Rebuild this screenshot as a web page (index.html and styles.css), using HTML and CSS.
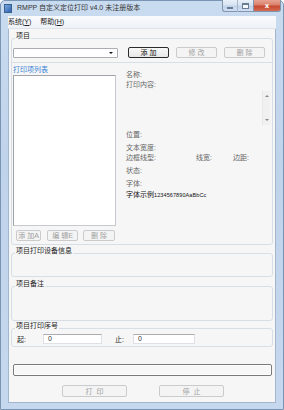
FILE: index.html
```html
<!DOCTYPE html>
<html lang="zh">
<head>
<meta charset="utf-8">
<title>RMPP</title>
<link rel="stylesheet" href="styles.css">
</head>
<body>
<div class="window">
  <div class="titlebar">
    <span class="app-icon"></span>
    <span class="title">RMPP 自定义定位打印 v4.0 未注册版本</span>
    <div class="caption-btns">
      <span class="cap cap-min"><i></i></span>
      <span class="cap cap-max"><i></i></span>
      <span class="cap cap-close">x</span>
    </div>
  </div>
  <div class="menubar">
    <span class="menu">系统(<u>Y</u>)</span>
    <span class="menu">帮助(<u>H</u>)</span>
  </div>
  <div class="client">
    <fieldset class="group g-project">
      <legend>项目</legend>
      <div class="toprow">
        <div class="combo"><span class="combo-arrow"></span></div>
        <button class="btn btn-focus w-top">添 加</button>
        <button class="btn btn-dis w-top" disabled>修 改</button>
        <button class="btn btn-dis w-top" disabled>删 除</button>
      </div>
      <div class="divider"></div>
      <div class="items">
        <div class="left-col">
          <div class="list-label">打印项列表</div>
          <div class="listbox"></div>
          <div class="list-btns">
            <button class="btn btn-dis w-a" disabled>添 加A</button>
            <button class="btn btn-dis w-b" disabled>编 辑E</button>
            <button class="btn btn-dis w-c" disabled>删 除</button>
          </div>
        </div>
        <div class="right-col">
          <div class="line">名称:</div>
          <div class="line">打印内容:</div>
          <div class="content-box">
            <div class="vscroll"><span class="arr up"></span><span class="arr down"></span></div>
          </div>
          <div class="line m5">位置:</div>
          <div class="line m3">文本宽度:</div>
          <div class="line three"><span>边框线型:</span><span class="c2">线宽:</span><span class="c3">边距:</span></div>
          <div class="line m3">状态:</div>
          <div class="line m3">字体:</div>
          <div class="line m1 sample">字体示例<span class="latin">1234567890AaBbCc</span></div>
        </div>
      </div>
    </fieldset>
    <fieldset class="group g-device">
      <legend>项目打印设备信息</legend>
    </fieldset>
    <fieldset class="group g-note">
      <legend>项目备注</legend>
    </fieldset>
    <fieldset class="group g-seq">
      <legend>项目打印序号</legend>
      <div class="seqrow">
        <span class="seq-l">起:</span>
        <div class="input in-start">0</div>
        <span class="seq-l seq-stop">止:</span>
        <div class="input in-stop">0</div>
      </div>
    </fieldset>
    <div class="progress"></div>
    <div class="bottom-btns">
      <button class="btn btn-dis w-big" disabled>打 &nbsp;印</button>
      <button class="btn btn-dis w-big" disabled>停 &nbsp;止</button>
    </div>
  </div>
</div>
</body>
</html>
```
FILE: styles.css
```css
* { box-sizing: border-box; margin: 0; padding: 0; }
html, body { width: 284px; height: 410px; overflow: hidden; }
body {
  font-family: "Liberation Sans", "Noto Sans CJK SC", sans-serif;
  font-size: 7px;
  color: #444;
  background: #fff;
}
.window {
  width: 284px;
  height: 410px;
  background: linear-gradient(180deg, #c9dbef 0%, #bfd3eb 40%, #c6d8ed 100%);
  border: 1px solid #7a94b4;
  border-radius: 5px 5px 0 0;
  display: flex;
  flex-direction: column;
  padding: 0 7px 6px 7px;
}
.titlebar {
  height: 14px;
  display: flex;
  align-items: center;
  margin: 0 -7px;
  padding-left: 3px;
}
.app-icon {
  width: 8px; height: 9px;
  background: linear-gradient(135deg, #7aa7df, #2f63b2);
  border: 1px solid #3a5e8e;
  margin-right: 5px;
  margin-top: 1px;
}
.title { color: #333; line-height: 10px; white-space: nowrap; }
.caption-btns {
  margin-left: auto;
  margin-right: 2px;
  display: flex;
  align-self: flex-start;
  margin-top: -1px;
}
.cap {
  height: 12px;
  border: 1px solid #8095ae;
  border-top: none;
  display: flex; align-items: center; justify-content: center;
  background: linear-gradient(180deg, #e8f0f8 0%, #d8e4f2 45%, #c0d2e8 55%, #d0e0f1 100%);
}
.cap-min { width: 16px; border-radius: 0 0 0 3px; border-right: 1px solid #a8b8cc; }
.cap-max { width: 16px; border-left: none; }
.cap-close {
  width: 27px; border-left: none; border-radius: 0 0 3px 0;
  background: linear-gradient(180deg, #e8a393 0%, #d8806a 45%, #c7472f 55%, #d46d52 100%);
  color: #fff; font-family: "DejaVu Sans", sans-serif; font-weight: bold; font-size: 7px; line-height: 8px;
}
.cap-min i { width: 6px; height: 2px; background: #fff; border: 1px solid #6a7c92; margin-top: 5px; display: block; }
.cap-max i { width: 7px; height: 6px; border: 1px solid #6a7c92; border-top-width: 2px; display: block; background: #f4f8fc; }
.menubar {
  height: 13px;
  display: flex;
  align-items: center;
  background: linear-gradient(180deg, #f9fbfd, #eef2f7);
  border-bottom: 1px solid #dfe4ea;
  margin-top: 1px;
  gap: 9px;
}
.menu { line-height: 10px; color: #222; }
.menu u { text-decoration: underline; }
.client {
  flex: 1;
  background: #f6f6f6;
  border: 1px solid #a4b6cc;
  border-top: none;
  padding: 3px 2px 0 2px;
  display: flex;
  flex-direction: column;
}
.group {
  border: 1px solid #d5dfe5;
  border-radius: 3px;
  padding: 0 1px;
  min-inline-size: 0;
}
.group legend {
  font-size: 7px;
  line-height: 8px;
  padding: 0 1px 4px 1px;
  margin-left: 2px;
  color: #222;
}
.toprow {
  display: flex;
  align-items: center;
  margin-top: 3px;
  height: 11px;
}
.combo {
  width: 105px;
  height: 10px;
  background: #fff;
  border: 1px solid #abadb3;
  border-radius: 1px;
  display: flex;
  justify-content: flex-end;
  align-items: center;
  padding-right: 4px;
}
.combo-arrow {
  width: 0; height: 0;
  border-left: 2px solid transparent;
  border-right: 2px solid transparent;
  border-top: 2px solid #111;
}
.btn {
  height: 11px;
  font-family: inherit;
  font-size: 7px;
  line-height: 9px;
  border: 1px solid #707070;
  border-radius: 2px;
  background: linear-gradient(180deg, #f2f2f2 0%, #ebebeb 50%, #dddddd 51%, #cfcfcf 100%);
  color: #222;
  text-align: center;
  white-space: pre;
}
.btn-focus { border-color: #2b2b2b; background: linear-gradient(180deg, #f8f8f8, #e8e8e8); color: #111; }
.btn-dis {
  border-color: #c9cbcd;
  background: #f4f4f4;
  color: #a0a0a0;
}
.w-top { width: 41px; }
.toprow .btn + .btn { margin-left: 7px; }
.toprow .combo + .btn { margin-left: 10px; }
.divider {
  height: 1px;
  background: #d5dfe5;
  margin: 4px -1px 0 -1px;
}
.items { display: flex; padding-bottom: 3px; }
.left-col { width: 103px; display: flex; flex-direction: column; }
.list-label { color: #3a84d4; line-height: 10px; margin-top: 2px; }
.listbox {
  height: 151px;
  background: #fff;
  border: 1px solid #828790;
  border-color: #a0a4aa #c6c9cd #c6c9cd #a0a4aa;
}
.list-btns { display: flex; margin-top: 4px; padding-left: 3px; }
.w-a { width: 25px; }
.w-b { width: 31px; margin-left: 6px; }
.w-c { width: 32px; margin-left: 5px; }
.right-col {
  flex: 1;
  margin-left: 10px;
  margin-top: 7px;
  color: #666;
  display: flex;
  flex-direction: column;
}
.line { line-height: 10px; white-space: nowrap; }
.m1 { margin-top: 1px; }
.m3 { margin-top: 3px; }
.m5 { margin-top: 5px; }
.content-box {
  height: 34px;
  margin-top: 1px;
  display: flex;
  justify-content: flex-end;
  padding-right: 1px;
}
.vscroll {
  width: 8px;
  height: 34px;
  background: #f0f0f0;
  border-left: 1px solid #e8e8e8;
  display: flex;
  flex-direction: column;
  justify-content: space-between;
  align-items: center;
  padding: 4px 0;
}
.arr { width: 0; height: 0; border-left: 2px solid transparent; border-right: 2px solid transparent; }
.arr.up { border-bottom: 2px solid #888; }
.arr.down { border-top: 2px solid #888; }
.three { display: flex; }
.three .c2 { margin-left: 40px; }
.three .c3 { margin-left: 21px; }
.sample { color: #111; }
.sample .latin { font-size: 5.5px; letter-spacing: 0.1px; }
.g-device { margin-top: 2px; height: 30px; }
.g-note { margin-top: 3px; height: 41px; }
.g-seq { margin-top: 1px; }
.seqrow { display: flex; align-items: center; height: 10px; margin-bottom: 2px; }
.seq-l { margin-left: 4px; color: #222; width: 10px; }
.seq-stop { margin-left: 13px; }
.input {
  height: 10px;
  background: #fff;
  border: 1px solid #dde0e4;
  border-top-color: #abadb3;
  line-height: 8px;
  padding-left: 4px;
  color: #333;
}
.in-start { width: 59px; margin-left: 16px; }
.in-stop { width: 62px; margin-left: 8px; }
.progress {
  margin: 17px 1px 0 2px;
  height: 12px;
  border: 1px solid #7a7a7a;
  border-radius: 2px;
  background: #f7f7f7;
  box-shadow: inset 0 0 0 1px #fff;
}
.bottom-btns { display: flex; margin-top: 9px; padding-left: 51px; }
.w-big { width: 65px; height: 12px; }
.w-big + .w-big { margin-left: 32px; }
```
